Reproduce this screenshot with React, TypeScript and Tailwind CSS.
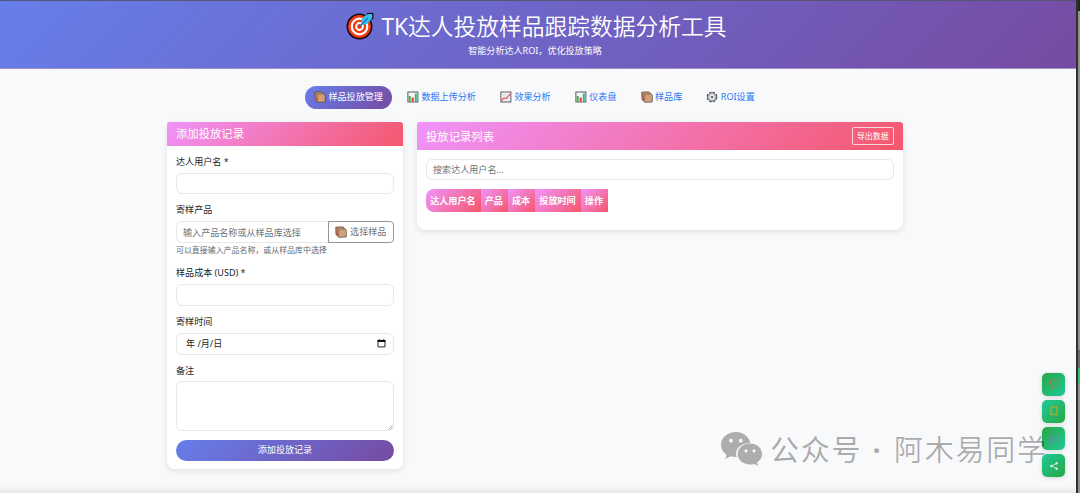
import { ReactNode } from "react";
import clsx from "clsx";

type IconProps = { className?: string };

function TargetIcon({ className }: IconProps) {
  return (
    <svg viewBox="0 0 28 28" className={className}>
      <circle cx="13.5" cy="14.5" r="12.2" fill="#f03a17" stroke="#0c0c10" strokeWidth="1.5" />
      <circle cx="13.5" cy="14.5" r="7.8" fill="#f03a17" stroke="#fff" strokeWidth="2.2" />
      <circle cx="13.5" cy="14.5" r="3.4" fill="#f03a17" stroke="#fff" strokeWidth="2" />
      <path d="M15.500 13V7.500L21 2l2.500-.3 2.700.2.500 3.600-5.500 6.500z" fill="#2fc3ee" />
      <path d="M20.500 2.300 23 1.300l3.700.2.300 4-1.300 2.300" fill="none" stroke="#0c0c10" strokeWidth="1.200" />
      <path d="M13.500 14.500 22 6" stroke="#1377c9" strokeWidth="1.3" />
    </svg>
  );
}

function BoxIcon({ className }: IconProps) {
  return (
    <svg viewBox="0 0 12 12" className={className}>
      <path d="M.8 1.200 7.800.9l3.400 3v7L4 11.300 1 8.600z" fill="#b98763" stroke="#4d4038" strokeWidth=".8" strokeLinejoin="round" />
      <path d="M1.200 1.600 7.600 1.300l3.100 2.700-6.500.3z" fill="#ab8463" />
      <path d="m1.200 1.800 3 2.500v6.600L1.400 8.400z" fill="#a9775a" />
      <path d="M4.200 4.100 10.700 3.800v6.600l-6.500.4z" fill="#d0a07a" />
      <path d="m1.500 6.800 1.500 1.300v1.500L1.500 8.300z" fill="#e23b3b" />
    </svg>
  );
}

function BarsIcon({ className }: IconProps) {
  return (
    <svg viewBox="0 0 12 12" className={className}>
      <rect x=".9" y="1" width="10" height="10" fill="#f7f7f7" stroke="#4b4b4f" strokeWidth=".9" />
      <path d="M2.700 10.500V5" stroke="#3fae55" strokeWidth="2" />
      <path d="M5.700 10.500V6.500" stroke="#e2342c" strokeWidth="2" />
      <path d="M8.800 10.500V2.500" stroke="#36b58b" strokeWidth="2" />
    </svg>
  );
}

function TrendIcon({ className }: IconProps) {
  return (
    <svg viewBox="0 0 12 12" className={className}>
      <rect x=".9" y="1" width="10" height="10" fill="#f1f1f4" stroke="#4b4b4f" strokeWidth=".9" />
      <path d="M1.5 4.2h9M1.5 7.5h9M4.3 1.5v9M7.6 1.5v9" stroke="#d0d4da" strokeWidth=".4" />
      <path d="m1.500 9.500 2.500-2.600 2 .8 4.600-5" fill="none" stroke="#e5534b" strokeWidth="1.100" />
    </svg>
  );
}

function GearIcon({ className }: IconProps) {
  return (
    <svg viewBox="0 0 12 12" className={className}>
      <circle cx="6" cy="6" r="4.8" fill="none" stroke="#45474c" strokeWidth="1.1" strokeDasharray="2.600 1.170" />
      <circle cx="6" cy="6" r="4.2" fill="#dadce0" stroke="#54575c" strokeWidth=".8" />
      <circle cx="6" cy="6" r="2.400" fill="#f5f6f7" stroke="#a5a8ae" strokeWidth=".5" />
      <circle cx="6" cy="6" r="1" fill="#33353a" />
    </svg>
  );
}

function CalendarIcon({ className }: IconProps) {
  return (
    <svg viewBox="0 0 9 9" className={className}>
      <path d="M1 1.4h7v6.5H1z" fill="none" stroke="#111" strokeWidth=".9" />
      <path d="M.6 1h7.8v2.1H.6zM1.8.2h1v1h-1zM6.2.2h1v1h-1z" fill="#111" />
    </svg>
  );
}

function WechatIcon({ className }: IconProps) {
  return (
    <svg viewBox="0 0 42 34" className={className}>
      <path
        d="M15 0C6.700 0 0 5.600 0 12.800c0 4 2.200 7.500 5.600 9.900L4.400 27l5.200-2.700c1.900.6 3.700.9 6 .8C13 17 20 10.700 29.300 10.900 28 4.500 22 0 15 0z"
        fill="#adadad"
      />
      <path
        d="M29 11.600c-6.900 0-12.300 4.700-12.300 10.500S22.100 32.500 29 32.500c1.500 0 2.900-.2 4.200-.6l3.900 2.100-1-3.500c3.200-2 5-4.900 5-8.400 0-5.800-5.300-10.500-12.100-10.500z"
        fill="#adadad"
      />
      <g fill="#f8f9fb">
        <circle cx="10" cy="8.700" r="1.900" />
        <circle cx="19.800" cy="8.700" r="1.900" />
        <circle cx="25" cy="18.800" r="1.600" />
        <circle cx="33" cy="18.800" r="1.600" />
      </g>
    </svg>
  );
}

const tabs = [
  { label: "样品投放管理", Icon: BoxIcon },
  { label: "数据上传分析", Icon: BarsIcon },
  { label: "效果分析", Icon: TrendIcon },
  { label: "仪表盘", Icon: BarsIcon },
  { label: "样品库", Icon: BoxIcon },
  { label: "ROI设置", Icon: GearIcon },
];

const columns = ["达人用户名", "产品", "成本", "投放时间", "操作"];

const inputClass =
  "block h-[21.6px] w-full rounded-[6px] border border-[#e6e8ea] bg-white px-[6px] text-[9.07px] text-[#212529] placeholder:text-[#6c757d] outline-none";

function Field({ label, children }: { label: string; children: ReactNode }) {
  return (
    <div className="mb-[9.1px]">
      <label className="mb-[4.5px] block h-[13.6px] leading-[13.6px]">{label}</label>
      {children}
    </div>
  );
}

function RecordForm() {
  return (
    <section className="h-[347px] w-[236px] rounded-[8px] bg-white shadow-[0_2px_6px_rgba(0,0,0,0.1)]">
      <div className="h-[23.500px] rounded-t-[3px] bg-[linear-gradient(135deg,#f093fb_0%,#f5576c_100%)] px-[9px] text-[11.34px] leading-[24.500px] text-white">
        添加投放记录
      </div>
      <div className="px-[9px] pt-[9px]">
        <Field label="达人用户名 *">
          <input className={inputClass} />
        </Field>
        <Field label="寄样产品">
          <div className="flex">
            <input
              placeholder="输入产品名称或从样品库选择"
              className="h-[21.6px] min-w-0 flex-1 rounded-l-[6px] border border-r-0 border-[#e6e8ea] px-[6px] text-[9.07px] outline-none placeholder:text-[#6c757d]"
            />
            <button className="flex h-[21.6px] w-[66.500px] items-center justify-center gap-[3px] rounded-r-[4px] border border-[#8f969d] text-[#6c757d]">
              <BoxIcon className="size-[12px]" />
              选择样品
            </button>
          </div>
          <div className="mt-[2.3px] h-[11.9px] text-[7.94px] leading-[11.9px] text-[#5f676f]">
            可以直接输入产品名称，或从样品库中选择
          </div>
        </Field>
        <Field label="样品成本 (USD) *">
          <input className={inputClass} />
        </Field>
        <Field label="寄样时间">
          <div className={clsx(inputClass, "flex items-center justify-between pr-[7px] pl-[9px]")}>
            <span>年 /月/日</span>
            <CalendarIcon className="size-[9px]" />
          </div>
        </Field>
        <Field label="备注">
          <div className="relative -mt-[.5px]">
            <textarea className="block h-[49.500px] w-full resize-none rounded-[6px] border border-[#e6e8ea] outline-none" />
            <svg viewBox="0 0 6 6" className="absolute right-[1px] bottom-[1px] size-[5px]">
              <path d="M.5 5.500l5-5M3.200 5.500l2.300-2.300" stroke="#777" strokeWidth=".7" />
            </svg>
          </div>
        </Field>
        <button className="block h-[20.5px] w-full rounded-full bg-[linear-gradient(135deg,#667eea_0%,#764ba2_100%)] text-center leading-[20.5px] text-white">
          添加投放记录
        </button>
      </div>
    </section>
  );
}

function RecordList() {
  return (
    <section className="h-[108px] w-[486px] rounded-[8px] bg-white shadow-[0_2px_6px_rgba(0,0,0,0.1)]">
      <div className="flex h-[27.500px] items-center justify-between rounded-t-[3px] bg-[linear-gradient(135deg,#f093fb_0%,#f5576c_100%)] px-[9px] text-white">
        <h2 className="pt-[1px] text-[11.34px]">投放记录列表</h2>
        <button className="h-[18px] w-[42.500px] rounded-[2px] border border-white/75 text-center text-[7.94px] leading-[16px]">
          导出数据
        </button>
      </div>
      <div className="px-[9px] pt-[9px]">
        <input className={inputClass} placeholder="搜索达人用户名..." />
        <table className="mt-[9px] border-separate border-spacing-0">
          <thead>
            <tr>
              {columns.map((column) => (
                <th
                  key={column}
                  className="h-[22.700px] bg-[linear-gradient(135deg,#f093fb_0%,#f5576c_100%)] pr-[5px] pl-[4.200px] py-0 text-left font-bold whitespace-nowrap text-white first:rounded-l-[8px]"
                >
                  {column}
                </th>
              ))}
            </tr>
          </thead>
        </table>
      </div>
    </section>
  );
}

function FloatingActions() {
  const base = "flex size-[23px] items-center justify-center rounded-[5px] shadow-[0_1px_4px_rgba(0,0,0,0.15)]";
  const toRight = "bg-[linear-gradient(135deg,#28a745_0%,#20c997_100%)]";
  const toLeft = "bg-[linear-gradient(135deg,#20c997_0%,#28a745_100%)]";

  return (
    <div className="absolute top-[372.500px] left-[1042px] flex flex-col gap-[4.300px]">
      <button className={clsx(base, toRight)}>
        <svg viewBox="0 0 10 10" className="size-[10px]" fill="none" stroke="#d0604f" strokeWidth="1">
          <path d="M5 8.800C3 7.800 1.200 5.600 1.200 3.500c0-1.600 1-2.300 2-2.300.8 0 1.300.5 1.800.6.500-.1 1-.6 1.800-.6 1 0 2 .7 2 2.300C8.800 5.600 7 7.800 5 8.800z" />
        </svg>
      </button>
      <button className={clsx(base, toLeft)}>
        <svg viewBox="0 0 10 10" className="size-[10px]" fill="none" stroke="#d0a71c" strokeWidth="1">
          <path d="M2 1h6v8H7L5 7.800 3 9H2z" />
        </svg>
      </button>
      <button className={clsx(base, toRight)}>
        <svg viewBox="0 0 10 10" className="size-[10px]" fill="none" stroke="#6a80bc" strokeWidth=".9">
          <path d="M3 1.800h5L9 3v4.300L8 8.200H1.500V3z" />
          <path d="M3.500 5h.8M5 5h.8M6.500 5h.8" />
        </svg>
      </button>
      <button className={clsx(base, toLeft)}>
        <svg viewBox="0 0 10 10" className="size-[10px]" fill="#e4f8ed" stroke="#e4f8ed">
          <path d="M7.500 2.500 2.500 5l5 2.500" fill="none" strokeWidth=".8" />
          <circle cx="7.600" cy="2.300" r=".8" />
          <circle cx="2.300" cy="5" r=".8" />
          <circle cx="7.600" cy="7.700" r=".8" />
        </svg>
      </button>
    </div>
  );
}

export default function App() {
  return (
    <div className="relative flex h-[493px] w-[1080px] overflow-hidden bg-[#f8f9fb] font-['Noto_Sans','Noto_Sans_CJK_SC',sans-serif] text-[9.07px] text-[#212529]">
      <main className="flex w-[1076px] flex-col">
        <header className="h-[69px] border-t border-b border-t-[#565573] border-b-[#a590cb] bg-[linear-gradient(135deg,#667eea_0%,#764ba2_100%)] pt-[9px] text-center text-white">
          <h1 className="flex h-[34px] items-center justify-center gap-[8px] pr-[4px] text-[22.75px] leading-[34px] whitespace-nowrap">
            <TargetIcon className="mt-[-2px] size-[28px]" />
            <span className="font-['Open_Sans','Noto_Sans_CJK_SC',sans-serif] font-[350]">
              <span className="font-normal">TK</span>达人投放样品跟踪数据分析工具
            </span>
          </h1>
          <p className="pr-[6px] leading-[14px]">智能分析达人ROI，优化投放策略</p>
        </header>

        <nav className="mt-[17px] flex h-[22.500px] pl-[304.500px]">
          {tabs.map(({ label, Icon }, i) => (
            <button
              key={label}
              className={clsx(
                "mr-[5px] flex items-center gap-[2.400px] rounded-full px-[9.600px] whitespace-nowrap",
                i === 0 ? "bg-[linear-gradient(135deg,#667eea_0%,#764ba2_100%)] text-white" : "text-[#2878f5]"
              )}
            >
              <Icon className="size-[12px]" />
              {label}
            </button>
          ))}
        </nav>

        <div className="mt-[13.500px] flex items-start gap-[14px] pl-[167px]">
          <RecordForm />
          <RecordList />
        </div>

        <div className="mt-auto h-[7px] bg-linear-to-b from-[#f8f9fb] to-[#e6e7e8]" />
      </main>

      <div className="flex w-[4px] flex-col border-l-2 border-[#303033] bg-[#929292]">
        <div className="h-[11px] bg-[#252527]" />
        <div className="mt-[339px] h-[18px] bg-[#6b6b6b]" />
        <div className="h-[15px] bg-[#3fc463]" />
      </div>

      <FloatingActions />

      <div className="pointer-events-none absolute top-[428px] left-[721px] flex items-start whitespace-nowrap text-black/32">
        <WechatIcon className="mt-[4px] h-[34px] w-[42px]" />
        <span className="ml-[7px] text-[29px] leading-[44px] tracking-[1.700px]">公众号</span>
        <span className="w-[32px] pr-[3px] text-center text-[29px] leading-[44px] font-bold">·</span>
        <span className="text-[29px] leading-[44px] font-[350] tracking-[1.700px]">阿木易同学</span>
      </div>
    </div>
  );
}
